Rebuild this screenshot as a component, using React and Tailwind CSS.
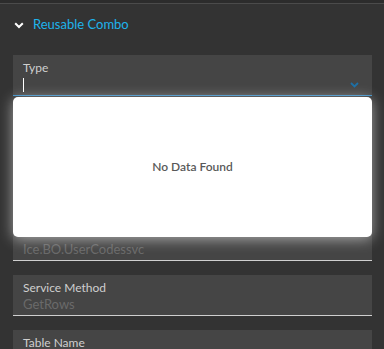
import React from 'react';

const fields = [
  { label: 'Type', value: '', active: true },
  { label: 'Service Type', value: 'BO' },
  { label: 'Service Name', value: 'Ice.BO.UserCodessvc' },
  { label: 'Service', value: 'Ice.BO.UserCodessvc' },
  { label: 'Service Method', value: 'GetRows' },
  { label: 'Table Name', value: '' },
];

const Field = ({ label, value, active }) => (
  <div
    className={
      'h-[41px] bg-[#454545] px-[10px] pt-[5px] border-b ' +
      (active ? 'border-[#3a8cc4]' : 'border-[#cfcfcf]')
    }
  >
    <div className="text-[12px] leading-[16px] text-[#cfcfcf]">{label}</div>
    <div className="flex items-center h-[17px]">
      {active ? (
        <>
          <span className="w-px h-[14px] bg-white" />
          <svg className="ml-auto mr-[3px]" width="9" height="6" viewBox="0 0 9 6">
            <path d="M1 1l3.5 3.5L8 1" fill="none" stroke="#1d6fa5" strokeWidth="1.8" />
          </svg>
        </>
      ) : (
        <span className="text-[13px] leading-[17px] text-[#6a6a6a]">{value}</span>
      )}
    </div>
  </div>
);

export default function App() {
  return (
    <div className="w-[384px] h-[349px] overflow-hidden bg-[#333333] font-['Lato',sans-serif] relative">
      <div className="h-[3px] bg-[#2c2c2c]" />
      <div className="h-px bg-[#4b4b4b]" />
      <div className="flex items-center h-[42px] pl-[14px]">
        <svg width="10" height="7" viewBox="0 0 10 7">
          <path d="M1.2 1.2L5 5l3.8-3.8" fill="none" stroke="#ffffff" strokeWidth="2" />
        </svg>
        <span className="ml-[9px] text-[13px] text-[#1eb4ec]">Reusable Combo</span>
      </div>
      <div className="pt-[9px] pl-[13px] pr-[12px] flex flex-col gap-[14px]">
        {fields.map((f) => (
          <Field key={f.label} {...f} />
        ))}
      </div>
      <div className="absolute left-[13px] top-[97px] w-[359px] h-[140px] bg-white rounded-[5px] shadow-[0_2px_14px_rgba(255,255,255,0.55)] flex items-center justify-center">
        <span className="text-[12px] font-semibold text-[#595959]">No Data Found</span>
      </div>
    </div>
  );
}
